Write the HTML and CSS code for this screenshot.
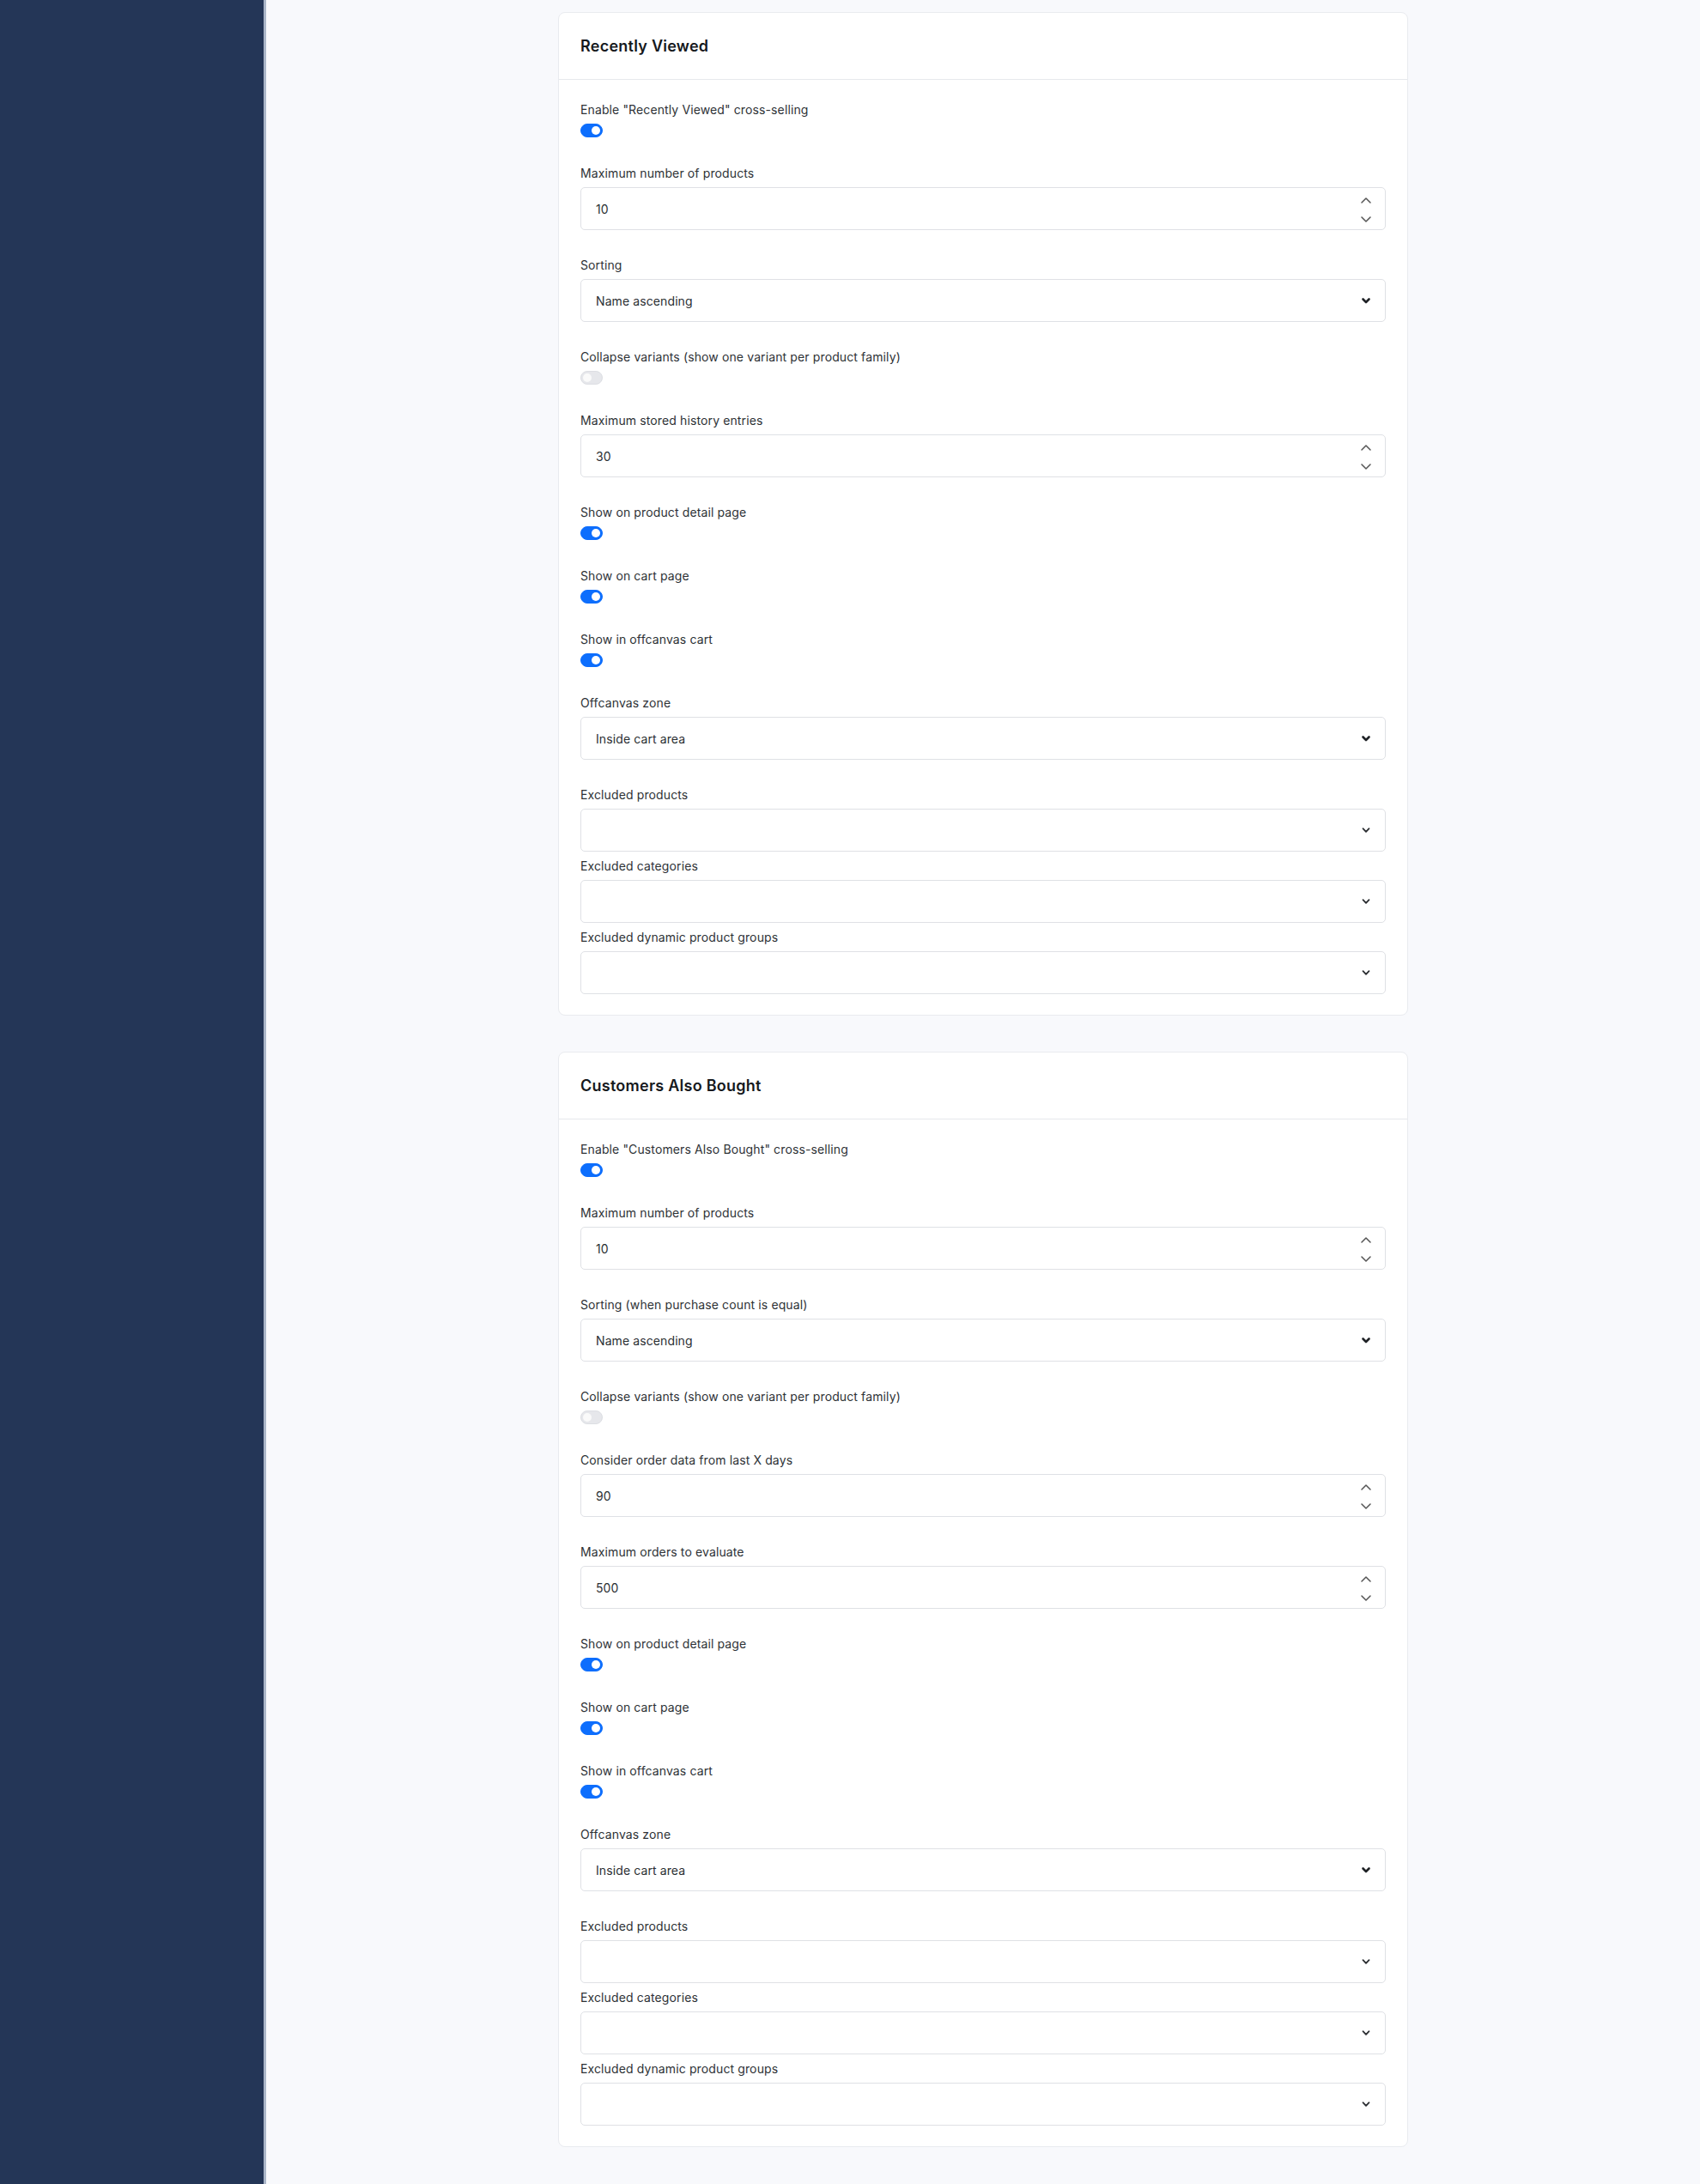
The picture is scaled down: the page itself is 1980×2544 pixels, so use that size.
FILE: index.html
```html
<!DOCTYPE html>
<html lang="en">
	<head>
		<meta charset="UTF-8">
		<meta name="viewport" content="width=device-width,initial-scale=1">
		<title>Cross-selling settings</title>
		<link rel="stylesheet" href="styles.css">
	</head>
	<body>
		<aside class="sidebar"></aside>
		<main class="main">
			<section class="card">
				<header class="card__header">
					<h2 class="card__title">Recently Viewed</h2>
				</header>
				<div class="card__body">
					<div class="field">
						<label class="field__label">Enable "Recently Viewed" cross-selling</label>
						<div class="switch-row"><span class="switch is-on"></span></div>
					</div>
					<div class="field">
						<label class="field__label">Maximum number of products</label>
						<div class="control">
							<span class="control__value">10</span>
							<svg class="spin" width="12" height="36" viewBox="0 0 12 36"><path d="M1 11l5-5 5 5M1 28l5 5 5-5" fill="none" stroke="#555" stroke-width="1.5" stroke-linecap="round" stroke-linejoin="round"/></svg>
						</div>
					</div>
					<div class="field">
						<label class="field__label">Sorting</label>
						<div class="control">
							<span class="control__value">Name ascending</span>
							<svg class="caret" width="12" height="12" viewBox="0 0 12 12"><path d="M2.5 4.5l3.5 3.5 3.5-3.5" fill="none" stroke="#1f2226" stroke-width="2.6" stroke-linecap="round" stroke-linejoin="round"/></svg>
						</div>
					</div>
					<div class="field">
						<label class="field__label">Collapse variants (show one variant per product family)</label>
						<div class="switch-row"><span class="switch"></span></div>
					</div>
					<div class="field">
						<label class="field__label">Maximum stored history entries</label>
						<div class="control">
							<span class="control__value">30</span>
							<svg class="spin" width="12" height="36" viewBox="0 0 12 36"><path d="M1 11l5-5 5 5M1 28l5 5 5-5" fill="none" stroke="#555" stroke-width="1.5" stroke-linecap="round" stroke-linejoin="round"/></svg>
						</div>
					</div>
					<div class="field">
						<label class="field__label">Show on product detail page</label>
						<div class="switch-row"><span class="switch is-on"></span></div>
					</div>
					<div class="field">
						<label class="field__label">Show on cart page</label>
						<div class="switch-row"><span class="switch is-on"></span></div>
					</div>
					<div class="field">
						<label class="field__label">Show in offcanvas cart</label>
						<div class="switch-row"><span class="switch is-on"></span></div>
					</div>
					<div class="field">
						<label class="field__label">Offcanvas zone</label>
						<div class="control">
							<span class="control__value">Inside cart area</span>
							<svg class="caret" width="12" height="12" viewBox="0 0 12 12"><path d="M2.5 4.5l3.5 3.5 3.5-3.5" fill="none" stroke="#1f2226" stroke-width="2.6" stroke-linecap="round" stroke-linejoin="round"/></svg>
						</div>
					</div>
					<div class="field field--tight">
						<label class="field__label">Excluded products</label>
						<div class="control">
							<span class="control__value"></span>
							<svg class="caret" width="12" height="12" viewBox="0 0 12 12"><path d="M2.5 4.2l3.5 3.6 3.5-3.6" fill="none" stroke="#2a2d31" stroke-width="1.8" stroke-linecap="round" stroke-linejoin="round"/></svg>
						</div>
					</div>
					<div class="field field--tight">
						<label class="field__label">Excluded categories</label>
						<div class="control">
							<span class="control__value"></span>
							<svg class="caret" width="12" height="12" viewBox="0 0 12 12"><path d="M2.5 4.2l3.5 3.6 3.5-3.6" fill="none" stroke="#2a2d31" stroke-width="1.8" stroke-linecap="round" stroke-linejoin="round"/></svg>
						</div>
					</div>
					<div class="field field--last">
						<label class="field__label">Excluded dynamic product groups</label>
						<div class="control">
							<span class="control__value"></span>
							<svg class="caret" width="12" height="12" viewBox="0 0 12 12"><path d="M2.5 4.2l3.5 3.6 3.5-3.6" fill="none" stroke="#2a2d31" stroke-width="1.8" stroke-linecap="round" stroke-linejoin="round"/></svg>
						</div>
					</div>
				</div>
			</section>

			<section class="card">
				<header class="card__header">
					<h2 class="card__title">Customers Also Bought</h2>
				</header>
				<div class="card__body">
					<div class="field">
						<label class="field__label">Enable "Customers Also Bought" cross-selling</label>
						<div class="switch-row"><span class="switch is-on"></span></div>
					</div>
					<div class="field">
						<label class="field__label">Maximum number of products</label>
						<div class="control">
							<span class="control__value">10</span>
							<svg class="spin" width="12" height="36" viewBox="0 0 12 36"><path d="M1 11l5-5 5 5M1 28l5 5 5-5" fill="none" stroke="#555" stroke-width="1.5" stroke-linecap="round" stroke-linejoin="round"/></svg>
						</div>
					</div>
					<div class="field">
						<label class="field__label">Sorting (when purchase count is equal)</label>
						<div class="control">
							<span class="control__value">Name ascending</span>
							<svg class="caret" width="12" height="12" viewBox="0 0 12 12"><path d="M2.5 4.5l3.5 3.5 3.5-3.5" fill="none" stroke="#1f2226" stroke-width="2.6" stroke-linecap="round" stroke-linejoin="round"/></svg>
						</div>
					</div>
					<div class="field">
						<label class="field__label">Collapse variants (show one variant per product family)</label>
						<div class="switch-row"><span class="switch"></span></div>
					</div>
					<div class="field">
						<label class="field__label">Consider order data from last X days</label>
						<div class="control">
							<span class="control__value">90</span>
							<svg class="spin" width="12" height="36" viewBox="0 0 12 36"><path d="M1 11l5-5 5 5M1 28l5 5 5-5" fill="none" stroke="#555" stroke-width="1.5" stroke-linecap="round" stroke-linejoin="round"/></svg>
						</div>
					</div>
					<div class="field">
						<label class="field__label">Maximum orders to evaluate</label>
						<div class="control">
							<span class="control__value">500</span>
							<svg class="spin" width="12" height="36" viewBox="0 0 12 36"><path d="M1 11l5-5 5 5M1 28l5 5 5-5" fill="none" stroke="#555" stroke-width="1.5" stroke-linecap="round" stroke-linejoin="round"/></svg>
						</div>
					</div>
					<div class="field">
						<label class="field__label">Show on product detail page</label>
						<div class="switch-row"><span class="switch is-on"></span></div>
					</div>
					<div class="field">
						<label class="field__label">Show on cart page</label>
						<div class="switch-row"><span class="switch is-on"></span></div>
					</div>
					<div class="field">
						<label class="field__label">Show in offcanvas cart</label>
						<div class="switch-row"><span class="switch is-on"></span></div>
					</div>
					<div class="field">
						<label class="field__label">Offcanvas zone</label>
						<div class="control">
							<span class="control__value">Inside cart area</span>
							<svg class="caret" width="12" height="12" viewBox="0 0 12 12"><path d="M2.5 4.5l3.5 3.5 3.5-3.5" fill="none" stroke="#1f2226" stroke-width="2.6" stroke-linecap="round" stroke-linejoin="round"/></svg>
						</div>
					</div>
					<div class="field field--tight">
						<label class="field__label">Excluded products</label>
						<div class="control">
							<span class="control__value"></span>
							<svg class="caret" width="12" height="12" viewBox="0 0 12 12"><path d="M2.5 4.2l3.5 3.6 3.5-3.6" fill="none" stroke="#2a2d31" stroke-width="1.8" stroke-linecap="round" stroke-linejoin="round"/></svg>
						</div>
					</div>
					<div class="field field--tight">
						<label class="field__label">Excluded categories</label>
						<div class="control">
							<span class="control__value"></span>
							<svg class="caret" width="12" height="12" viewBox="0 0 12 12"><path d="M2.5 4.2l3.5 3.6 3.5-3.6" fill="none" stroke="#2a2d31" stroke-width="1.8" stroke-linecap="round" stroke-linejoin="round"/></svg>
						</div>
					</div>
					<div class="field field--last">
						<label class="field__label">Excluded dynamic product groups</label>
						<div class="control">
							<span class="control__value"></span>
							<svg class="caret" width="12" height="12" viewBox="0 0 12 12"><path d="M2.5 4.2l3.5 3.6 3.5-3.6" fill="none" stroke="#2a2d31" stroke-width="1.8" stroke-linecap="round" stroke-linejoin="round"/></svg>
						</div>
					</div>
				</div>
			</section>
		</main>
	</body>
</html>
```

FILE: styles.css
```css
body
{
	margin: 0;
	display: flex;
	min-height: 100vh;
	background-color: #f8f9fc;
	font-family: Inter, 'Noto Sans', sans-serif;
	color: #2b2f33;
}

.sidebar
{
	flex: 0 0 307px;
	background-color: #243657;
	border-right: 3px solid #aab5c8;
}

.main
{
	flex: 1;
	display: flex;
	flex-direction: column;
	align-items: center;
	gap: 42px;
	padding: 14px 0 43px;
}

.card
{
	width: 990px;
	box-sizing: border-box;
	background-color: #fff;
	border: 1px solid #e9ebef;
	border-radius: 8px;
}

.card__header
{
	height: 77px;
	display: flex;
	align-items: center;
	padding: 0 25px;
	border-bottom: 1px solid #e6e8ec;
}

.card__title
{
	margin: 0;
	font-size: 18px;
	font-weight: 600;
	letter-spacing: 0.25px;
	color: #16191d;
}

.card__body
{
	padding: 24px 25px;
}

.field
{
	margin-bottom: 30px;
}

.field--tight
{
	margin-bottom: 6px;
}

.field--last
{
	margin-bottom: 0;
}

.field__label
{
	display: block;
	padding-top: 1px;
	margin-bottom: 6px;
	font-size: 14px;
	line-height: 20px;
	letter-spacing: 0.12px;
	color: #2e3236;
}

.switch-row
{
	height: 17px;
}

.switch
{
	display: block;
	position: relative;
	width: 26px;
	height: 16px;
	box-sizing: border-box;
	border-radius: 8px;
	background-color: #e6e7eb;
	border: 1px solid #dcdee3;
}

.switch::after
{
	content: '';
	position: absolute;
	top: 2px;
	left: 2px;
	width: 10px;
	height: 10px;
	border-radius: 50%;
	background-color: #fafafa;
}

.switch.is-on
{
	background-color: #0d6efd;
	border-color: #0d6efd;
}

.switch.is-on::after
{
	left: auto;
	right: 2px;
	background-color: #fff;
}

.control
{
	height: 50px;
	box-sizing: border-box;
	display: flex;
	align-items: center;
	justify-content: space-between;
	padding: 0 16px 0 17px;
	border: 1px solid #dfe1e5;
	border-radius: 5px;
	background-color: #fff;
}

.control__value
{
	font-size: 14px;
	letter-spacing: 0.1px;
	color: #2b2f33;
}
```
